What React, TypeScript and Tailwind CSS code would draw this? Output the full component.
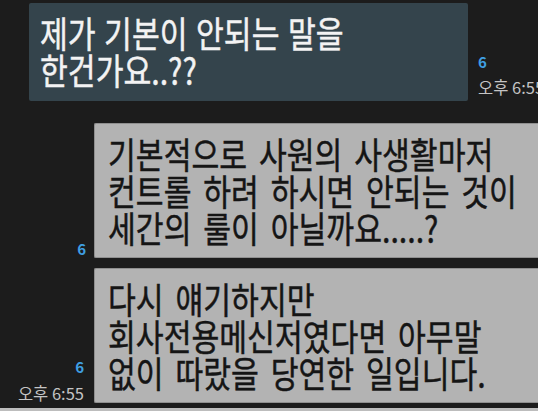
const FONT = "[font-family:'Noto_Sans_CJK_KR','Noto_Sans_CJK_SC',sans-serif]";

const Lines = ({ lines, color, spacing }: { lines: string[]; color: string; spacing: string }) => (
  <div
    className={`origin-left scale-x-[0.84] text-[36px] leading-[37px] [-webkit-text-stroke:0.5px_currentColor] whitespace-nowrap ${spacing} ${color}`}
  >
    {lines.map((l) => (
      <div key={l}>{l}</div>
    ))}
  </div>
);

const Unread = () => (
  <div className="text-[15px] leading-[15px] font-bold text-[#3f9fe2]">6</div>
);

const Time = () => (
  <div className="text-[16.5px] leading-[17px] text-[#c4c4c4] whitespace-nowrap">오후 6:55</div>
);

export default function App() {
  return (
    <div className={`w-[538px] h-[411px] overflow-hidden bg-[#1c1c1c] flex flex-col ${FONT}`}>
      {/* outgoing */}
      <div className="flex items-end pt-[3px] pl-[29px] gap-[10px]">
        <div className="w-[439px] h-[98px] shrink-0 rounded-[2px] bg-[#34444c] pl-[11px] pt-[11px]">
          <Lines
            color="text-[#f3f3f3]"
            spacing="[word-spacing:2px]"
            lines={["제가 기본이 안되는 말을", "한건가요..??"]}
          />
        </div>
        <div className="flex flex-col gap-[10px] pb-[5px]">
          <Unread />
          <Time />
        </div>
      </div>

      {/* incoming */}
      <div className="flex items-end mt-[22px] gap-[8px]">
        <div className="w-[86px] shrink-0 flex flex-col items-end pb-[2px]">
          <Unread />
        </div>
        <div className="flex-1 h-[135px] rounded-l-[2px] bg-[#b3b3b3] border-l border-y border-[#8f8f8f] pl-[13px] pt-[11px]">
          <Lines
            color="text-[#151515]"
            spacing="[word-spacing:6px]"
            lines={["기본적으로 사원의 사생활마저", "컨트롤 하려 하시면 안되는 것이", "세간의 룰이 아닐까요.....?"]}
          />
        </div>
      </div>

      <div className="flex items-end mt-[10px] gap-[8px]">
        <div className="w-[86px] shrink-0 flex flex-col items-end gap-[11px] pb-[1px] pr-[2px]">
          <Unread />
          <Time />
        </div>
        <div className="flex-1 h-[135px] rounded-l-[2px] bg-[#b3b3b3] border-l border-y border-[#8f8f8f] pl-[13px] pt-[11px]">
          <Lines
            color="text-[#151515]"
            spacing="[word-spacing:6px]"
            lines={["다시 얘기하지만", "회사전용메신저였다면 아무말", "없이 따랐을 당연한 일입니다."]}
          />
        </div>
      </div>

      <div className="mt-auto h-[3px] bg-[#bdbdbd]" />
    </div>
  );
}
